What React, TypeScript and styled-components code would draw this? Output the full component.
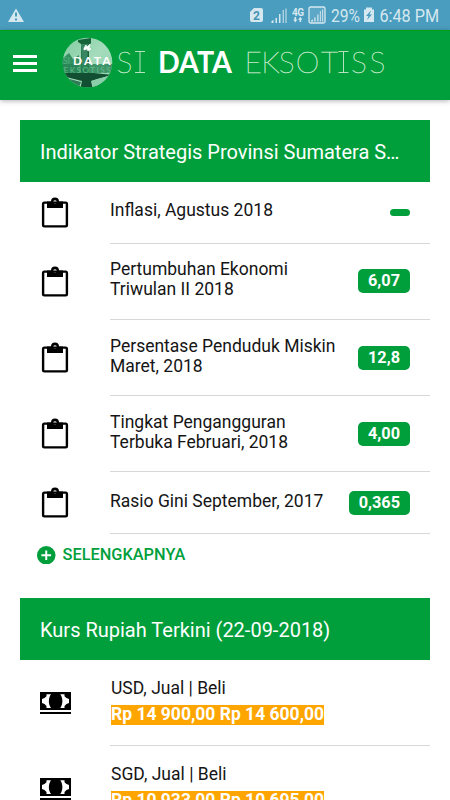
import React from "react";
import styled, { createGlobalStyle } from "styled-components";

const GREEN = "#009f3c";

const GlobalStyle = createGlobalStyle`
  * { box-sizing: border-box; }
  html, body { margin: 0; background: #fff; }
  body { font-family: Roboto, sans-serif; color: #151515; overflow: hidden; }
`;

const Screen = styled.main`
  width: 450px;
  height: 800px;
  overflow: hidden;
  background: #fff;
`;

const StatusBar = styled.div`
  height: 30px;
  background: #4a9dbf;
`;

const Toolbar = styled.header`
  height: 70px;
  display: flex;
  align-items: center;
  background: ${GREEN};
  border-top: 1px solid #00a012;
  box-shadow: 0 1px 5px rgba(0, 0, 0, 0.3);
`;

const MenuButton = styled.button`
  width: 50px;
  height: 48px;
  padding: 0 0 5px 13px;
  border: 0;
  background: none;
  display: flex;
  flex-direction: column;
  justify-content: center;
  gap: 4px;
`;

const MenuLine = styled.span`
  width: 24px;
  height: 3px;
  background: #fff;
`;

const Content = styled.div`
  padding: 20px 20px 0;
`;

const Card = styled.section`
  margin-bottom: 22px;
`;

const CardHeader = styled.h2`
  height: 62px;
  margin: 0;
  padding: 2px 20px 0;
  display: flex;
  align-items: center;
  background: ${GREEN};
  color: #fff;
  font-size: 20px;
  font-weight: 400;
  white-space: nowrap;
`;

const Row = styled.div<{ $height: number }>`
  height: ${(p) => p.$height}px;
  padding-left: 20px;
  display: flex;
`;

const IconSlot = styled.div`
  width: 70px;
  display: flex;
  align-items: center;
`;

const RowBody = styled.div`
  flex: 1;
  padding-right: 20px;
  display: flex;
  align-items: center;
  justify-content: space-between;
  border-bottom: 1px solid #d8d8d8;
`;

const Label = styled.div`
  margin-top: -4px;
  font-size: 17.5px;
  line-height: 20px;
  white-space: pre-line;
`;

const Badge = styled.span`
  height: 24px;
  padding: 0 10px;
  border-radius: 5px;
  background: ${GREEN};
  color: #fff;
  font-size: 16.3px;
  line-height: 23px;
  font-weight: 700;
  &:empty { height: 7px; border-radius: 4px; }
`;

const MoreButton = styled.button`
  height: 42px;
  padding: 0 0 0 17px;
  border: 0;
  background: none;
  display: flex;
  align-items: center;
  gap: 7px;
  color: ${GREEN};
  font: 500 16.35px Roboto, sans-serif;
`;

const RateBody = styled.div`
  flex: 1;
  padding: 18px 0 0 1px;
  border-bottom: 1px solid #d8d8d8;
  font-size: 17.5px;
  line-height: 20px;
`;

const Currency = styled.div`
  margin-bottom: 7px;
`;

const Rate = styled.span`
  display: block;
  width: 213px;
  height: 20px;
  background: #ffa500;
  color: #fff;
  font-weight: 700;
  line-height: 18px;
  white-space: nowrap;
`;

const StatusIcons = () => (
  <svg width="450" height="30" fill="#d6e8ef" fontFamily="Roboto, sans-serif">
    <path fillRule="evenodd" d="M16 8.5 24 22H8ZM15 12.5v4h2v-4Zm0 6v2h2v-2Z" />
    <path d="M254 8h7q2 0 2 2v10q0 2-2 2h-9q-2 0-2-2v-8Z" />
    <text x="253" y="19.5" fontSize="12" fontWeight="700" fill="#4693b4">2</text>
    <path d="M271.5 23v-2l2-1v3Zm4 0v-5h1.5v5Zm3.5 0v-9h1.5v9Zm3.7 0V10h1v13Zm2.8 0V8.5h1V23Z" />
    <text x="292" y="15.8" fontSize="10" fontWeight="700" textLength="12">4G</text>
    <path d="M294.5 17h1.6v2.5h1.3l-2.1 3-2.1-3h1.3Zm5 5v-2.3h-1.3l2.1-3 2.1 3h-1.3V22Z" />
    <rect x="309" y="7" width="16" height="16" rx="1.5" fill="#5ea8c7" stroke="#d6e8ef" strokeWidth="1.3" />
    <path d="M311 21.5v-1l2-1v2Zm3.3 0v-4h1.3v4Zm3 0v-7h1.2v7Zm2.6 0V11h.9v10.5Zm2.3 0V9.5h.9v12Z" />
    <text x="331" y="22" fontSize="19.2" textLength="29" lengthAdjust="spacingAndGlyphs">29%</text>
    <path fillRule="evenodd" d="M366 7.5h6v2h2V22h-10V9.5h2Zm4.5 3.5-4.5 5h2.5l-1.5 4 5-5.5h-2.6l1.6-3.5Z" />
    <text x="379.5" y="22" fontSize="19.2" textLength="59.5" lengthAdjust="spacingAndGlyphs">6:48 PM</text>
  </svg>
);

const Brand = () => (
  <svg width="340" height="69" role="img" aria-label="SI DATA EKSOTISS">
    <defs>
      <clipPath id="seal"><circle cx="37.5" cy="31.5" r="24.8" /></clipPath>
      <linearGradient id="haze" x1="0" y1="0" x2="1" y2="1">
        <stop offset="0" stopColor="#7fcb9f" />
        <stop offset="0.5" stopColor="#a5dcbc" />
        <stop offset="1" stopColor="#8fd2ab" />
      </linearGradient>
    </defs>
    <g clipPath="url(#seal)">
      <rect x="12" y="6" width="52" height="52" fill="url(#haze)" />
      <path d="M12 28 19 22 23 28 29 24V44H12Z" fill="#348f61" />
      <path d="M28 9 41 7V12L39 15V44H31V13L28 11Z" fill="#17643b" />
      <path d="M31 13h7l-1 26h-5Z" fill="#388762" />
      <path d="M12 33h50v9H12Z" fill="#278456" opacity=".8" />
      <path d="M12 42h32l19 2-16 4-6 2 2 9H30l2-9-20-5Z" fill="#124f32" />
      <path d="M12 46 31 51 28 59H12Z" fill="#2f7b55" />
      <path d="m42 50 22-7-4 10-17 6Z" fill="#8aceaa" />
      <path d="m34 17 2-3 1 2 3-3-1 4 2 1-3 2-1-2-3 1Z" fill="#fff" stroke="#fff" strokeWidth=".7" />
      <text x="13.5" y="41.5" fontFamily="Lato, sans-serif" fontSize="8" fill="#66bb8a" textLength="47">EKSOTISS</text>
    </g>
    <text x="13" y="32.5" fontFamily="Lato, sans-serif" fontSize="8.5" fill="#4fb47c">SI</text>
    <text x="23" y="33.5" fontFamily="Lato, sans-serif" fontSize="12" fontWeight="700" fill="#fff" textLength="37.5">DATA</text>
    <g fill="#c8eacb" stroke="#c8eacb" strokeWidth=".4" fontFamily="Lato, sans-serif" fontWeight="100" fontSize="30">
      <text x="66.5" y="41.5">S</text>
      <path d="M85 20.5h10M90 20.5v21M85 41.5h10" fill="none" strokeWidth=".9" />
      <text x="194.5 211.3 228.8 245.8 271 301 319.5" y="41.5">EKSOTSS</text>
      <path d="M288.5 20.5h10M293.5 20.5v21M288.5 41.5h10" fill="none" strokeWidth=".9" />
    </g>
    <text x="108" y="41.5" fontFamily="Lato, sans-serif" fontSize="29.5" fontWeight="700" fill="#fff" textLength="74" lengthAdjust="spacingAndGlyphs">DATA</text>
  </svg>
);

const Clipboard = () => (
  <svg width="30" height="34" viewBox="0 0 30 34">
    <rect x="3.1" y="6.6" width="23.8" height="23.8" rx="1.3" fill="none" stroke="#000" strokeWidth="2.4" />
    <path fillRule="evenodd" d="M7 5.6h4a4 4 0 0 1 8 0h4v6.3H7Zm8-1.3a1.8 1.8 0 1 0 0 3.6 1.8 1.8 0 0 0 0-3.6Z" fill="#000" />
  </svg>
);

const Cash = () => (
  <svg width="31" height="22" viewBox="0 0 31 22">
    <path d="M0 0h31v18H0Zm0 20h31v2H0Z" fill="#000" />
    <path d="M11 2.2H6.5v2L4.5 6 2 7v4l2.5 1 2 2v2H11C8.2 12 8.2 6.2 11 2.2Zm9.3 0h4.2v2l2 1.8L29 7v4l-2.5 1-2 2v2h-4.2c2.8-4 2.8-9.8 0-13.8Z" fill="#fff" />
  </svg>
);

const PlusIcon = () => (
  <svg width="18.5" height="18.5" viewBox="0 0 18 18">
    <circle cx="9" cy="9" r="9" fill={GREEN} />
    <path d="M9 4.3v9.4M4.3 9h9.4" stroke="#fff" strokeWidth="1.9" />
  </svg>
);

const indicators = [
  { label: "Inflasi, Agustus 2018", value: "", height: 61.6 },
  { label: "Pertumbuhan Ekonomi\nTriwulan II 2018", value: "6,07", height: 76.3 },
  { label: "Persentase Penduduk Miskin\nMaret, 2018", value: "12,8", height: 76.3 },
  { label: "Tingkat Pengangguran\nTerbuka Februari, 2018", value: "4,00", height: 76.3 },
  { label: "Rasio Gini September, 2017", value: "0,365", height: 61.5 },
];

const rates = [
  { name: "USD, Jual | Beli", value: "Rp 14 900,00 Rp 14 600,00" },
  { name: "SGD, Jual | Beli", value: "Rp 10 933,00 Rp 10 695,00" },
];

export default function App() {
  return (
    <Screen>
      <GlobalStyle />
      <StatusBar><StatusIcons /></StatusBar>
      <Toolbar>
        <MenuButton aria-label="Menu"><MenuLine /><MenuLine /><MenuLine /></MenuButton>
        <Brand />
      </Toolbar>
      <Content>
        <Card>
          <CardHeader>Indikator Strategis Provinsi Sumatera S…</CardHeader>
          {indicators.map((item) => (
            <Row key={item.label} $height={item.height}>
              <IconSlot><Clipboard /></IconSlot>
              <RowBody><Label>{item.label}</Label><Badge>{item.value}</Badge></RowBody>
            </Row>
          ))}
          <MoreButton><PlusIcon />SELENGKAPNYA</MoreButton>
        </Card>
        <Card>
          <CardHeader>Kurs Rupiah Terkini (22-09-2018)</CardHeader>
          {rates.map((rate) => (
            <Row key={rate.name} $height={86}>
              <IconSlot><Cash /></IconSlot>
              <RateBody><Currency>{rate.name}</Currency><Rate>{rate.value}</Rate></RateBody>
            </Row>
          ))}
        </Card>
      </Content>
    </Screen>
  );
}
